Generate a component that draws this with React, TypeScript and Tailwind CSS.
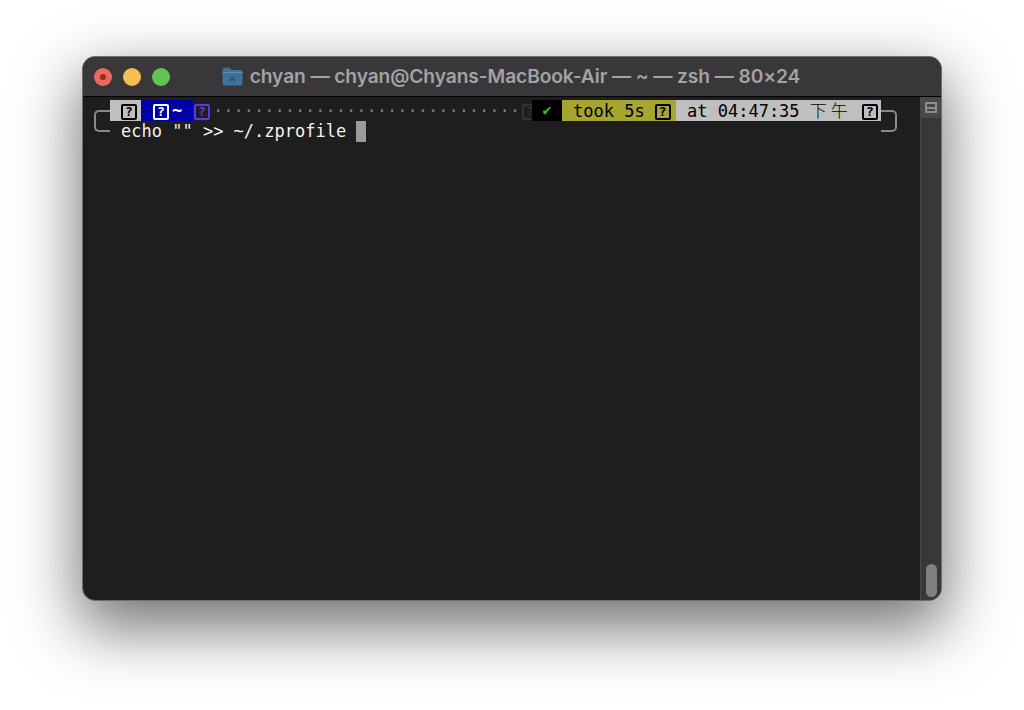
import React from 'react';

const mono = { fontFamily: '"DejaVu Sans Mono", "Noto Sans CJK SC", monospace' };

// the missing-glyph box zsh prints for powerline icons
const Missing = ({ className }: { className: string }) => (
  <span className={`flex items-center justify-center w-[16px] h-[16px] mt-[2px] border-2 rounded-[2px] text-[13px] leading-none font-bold ${className}`}>
    ?
  </span>
);

const App = () => {
  return (
    <div className="w-[1024px] h-[710px] bg-white overflow-hidden pt-[56px] pl-[82px]" style={{ fontFamily: 'Inter, sans-serif' }}>
      <div className="w-[860px] h-[545px] rounded-[13px] border border-[#6e6e70] bg-[#1e1e1e] overflow-hidden flex flex-col shadow-[0_24px_62px_4px_rgba(0,0,0,0.55)]">
        {/* Title bar */}
        <div className="relative h-[40px] shrink-0 bg-[#39373a] border-b border-black flex items-center justify-center">
          <div className="absolute left-[11px] top-[11px] flex gap-[11px]">
            <div className="w-[18px] h-[18px] rounded-full bg-[#ed6a5e] flex items-center justify-center">
              <div className="w-[6px] h-[6px] rounded-full bg-[#a0281f]" />
            </div>
            <div className="w-[18px] h-[18px] rounded-full bg-[#f5bf4f]" />
            <div className="w-[18px] h-[18px] rounded-full bg-[#61c554]" />
          </div>
          <div className="flex items-center gap-[7px] mr-[2px]">
            <svg width="21" height="19" viewBox="0 0 21 19">
              <path d="M0.5 2.5a2 2 0 0 1 2-2h5l2 2.5h9a2 2 0 0 1 2 2v11.5a2 2 0 0 1-2 2h-16a2 2 0 0 1-2-2z" fill="#3f7199" />
              <path d="M0.5 5h20v1h-20z" fill="#5a8cb4" />
              <path d="M7.5 12l3-3 3 3v3h-2v-2h-2v2h-2z" fill="#2f5a80" />
            </svg>
            <span className="text-[19.2px] font-semibold text-[#a3a2a4] tracking-[-0.1px] whitespace-nowrap">
              chyan — chyan@Chyans-MacBook-Air — ~ — zsh — 80×24
            </span>
          </div>
        </div>

        <div className="flex-1 flex min-h-0">
          {/* Terminal */}
          <div className="relative flex-1 pt-[3px] pl-[27px] text-[17px] leading-[21px] text-[#f2f2f2]" style={mono}>
            <div className="absolute left-[11px] top-[13px] w-[16px] h-[22px] border-2 border-r-0 border-[#8a8a8a] rounded-l-[5px]" />
            <div className="absolute left-[798px] top-[13px] w-[16px] h-[22px] border-2 border-l-0 border-[#8a8a8a] rounded-r-[5px]" />

            <div className="flex items-center h-[21px] w-[771px]">
              <div className="w-[31px] h-[21px] bg-[#bfbfbf] flex items-center justify-end pr-[4px]">
                <Missing className="border-black text-black" />
              </div>
              <div className="w-[52px] h-[21px] bg-[#0000a8] flex items-center pl-[12px] gap-[3px] font-bold text-white">
                <Missing className="border-white text-white" />
                <span>~</span>
              </div>
              <div className="ml-[1px]">
                <Missing className="border-[#5b39e6] text-[#5b39e6]" />
              </div>
              <div className="flex-1 min-w-0 overflow-hidden whitespace-nowrap text-[#7d7d7d] ml-[3px] mr-[2px] mt-[1px]">
                ······························
              </div>
              <div className="relative w-[40px] h-[21px] flex items-center">
                <Missing className="border-[#333] text-[#333]" />
                <div className="absolute right-0 top-0 w-[30px] h-[21px] bg-black flex items-center justify-center text-[#3fb53c] text-[15px] font-bold">
                  ✔
                </div>
              </div>
              <div className="w-[114px] h-[21px] bg-[#a5a52f] flex items-center pl-[11px] text-black">
                <span className="whitespace-pre mt-[1px]">took 5s</span>
                <span className="ml-[10px]"><Missing className="border-black text-black" /></span>
              </div>
              <div className="w-[205px] h-[21px] bg-[#bfbfbf] flex items-center pl-[11px] text-black">
                <span className="whitespace-pre mt-[1px]">at 04:47:35 <span className="font-light tracking-[4px]">下午</span></span>
                <span className="ml-auto mr-[3px]"><Missing className="border-black text-black" /></span>
              </div>
            </div>

            <div className="flex items-center h-[21px] pl-[11px]">
              <span className="whitespace-pre">echo "" {'>>'} ~/.zprofile </span>
              <span className="w-[10px] h-[21px] bg-[#9b9b9b]" />
            </div>
          </div>

          {/* Scrollbar */}
          <div className="w-[21px] shrink-0 bg-[#39373a] border-l border-[#4a484b] flex flex-col">
            <div className="h-[21px] bg-[#4a484c] flex items-center justify-center">
              <div className="w-[12px] h-[11px] border-2 border-[#8c8b8e] flex items-center">
                <div className="w-full h-[2px] bg-[#8c8b8e]" />
              </div>
            </div>
            <div className="flex-1" />
            <div className="w-[11px] h-[33px] bg-[#808080] rounded-full ml-[5px] mb-[3px]" />
          </div>
        </div>
      </div>
    </div>
  );
};

export default App;
